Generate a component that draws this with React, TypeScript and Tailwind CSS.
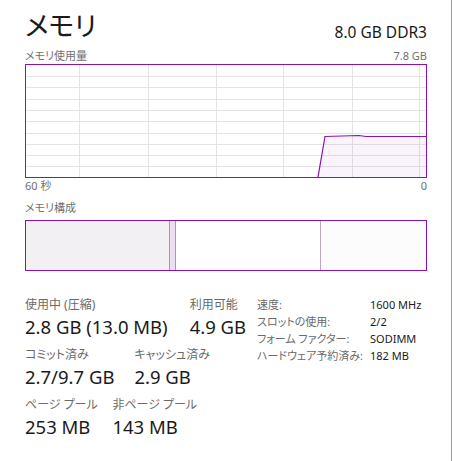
import React from 'react'

const font = { fontFamily: '"Noto Sans", "Noto Sans CJK JP", sans-serif' }

function UsageChart() {
  const vLines = [53, 122, 190, 257, 326, 393]
  const hLines = [11, 22, 34, 45, 56, 68, 79, 90, 101]
  return (
    <div className="h-[114px] w-[402px] border border-[#8b12ae] bg-white">
      <svg width="400" height="112" viewBox="0 0 400 112" className="block">
        {vLines.map(x => (
          <line key={'v' + x} x1={x + 0.5} y1="0" x2={x + 0.5} y2="112" stroke="#e4e4e4" strokeWidth="1" />
        ))}
        {hLines.map(y => (
          <line key={'h' + y} x1="0" y1={y + 0.5} x2="400" y2={y + 0.5} stroke="#e4e4e4" strokeWidth="1" />
        ))}
        <path d="M292 112 L299 71.5 L333 70.5 L340 71.5 L400 71.5 L400 112 Z" fill="#8b12ae" fillOpacity="0.05" />
        <path d="M292 112 L299 71.5 L333 70.5 L340 71.5 L400 71.5" fill="none" stroke="#8b12ae" strokeWidth="1.2" />
      </svg>
    </div>
  )
}

function CompositionBar() {
  return (
    <div className="flex h-[51px] w-[402px] border border-[#8b12ae] bg-white">
      <div className="w-[143px] bg-[#f3f0f4]" />
      <div className="w-[7px] border-x border-[#b48fc0] bg-[#ece0f0]" />
      <div className="w-[145px] border-r border-[#b8a8bd] bg-white" />
      <div className="flex-1 bg-[#fdfcfd]" />
    </div>
  )
}

function Stat({ label, value }: { label: string; value: string }) {
  // label overflows so only the value sets the column width
  return (
    <div className="flex flex-col">
      <span className="h-[18px] w-0 whitespace-nowrap text-[12px] leading-[18px] text-[#6a6a6a]">{label}</span>
      <span className="whitespace-nowrap text-[18.5px] leading-[26px] text-[#1a1a1a]">{value}</span>
    </div>
  )
}

export default function App() {
  const details = [
    ['速度:', '1600 MHz'],
    ['スロットの使用:', '2/2'],
    ['フォーム ファクター:', 'SODIMM'],
    ['ハードウェア予約済み:', '182 MB'],
  ]

  return (
    <div
      className="h-[461px] w-[452px] border-r border-[#9a9a9a] bg-white pl-[25px] pr-[24px] [font-feature-settings:'palt']"
      style={font}
    >
      <div className="flex items-end justify-between pt-[6px]">
        <h1 className="text-[27px] leading-[40px] text-[#1a1a1a]">メモリ</h1>
        <span className="mb-[3px] text-[15.5px] leading-[22px] text-[#1a1a1a]">8.0 GB DDR3</span>
      </div>

      <div className="mt-[2px] flex justify-between text-[11px] leading-[16px] text-[#707070]">
        <span>メモリ使用量</span>
        <span>7.8 GB</span>
      </div>
      <UsageChart />
      <div className="flex justify-between text-[11px] leading-[16px] text-[#707070]">
        <span>60 秒</span>
        <span>0</span>
      </div>

      <div className="mt-[6px] text-[11px] leading-[16px] text-[#707070]">メモリ構成</div>
      <div className="mt-[4px]">
        <CompositionBar />
      </div>

      <div className="mt-[25px] flex">
        <div className="flex w-[232px] flex-col gap-[6px]">
          <div className="flex gap-[22px]">
            <Stat label="使用中 (圧縮)" value="2.8 GB (13.0 MB)" />
            <Stat label="利用可能" value="4.9 GB" />
          </div>
          <div className="flex gap-[20px]">
            <Stat label="コミット済み" value="2.7/9.7 GB" />
            <Stat label="キャッシュ済み" value="2.9 GB" />
          </div>
          <div className="flex gap-[22px]">
            <Stat label="ページ プール" value="253 MB" />
            <Stat label="非ページ プール" value="143 MB" />
          </div>
        </div>
        <div className="grid grid-cols-[113px_auto] content-start text-[11px] leading-[17px]">
          {details.map(([k, v]) => (
            <React.Fragment key={k}>
              <span className="whitespace-nowrap text-[#6a6a6a]">{k}</span>
              <span className="whitespace-nowrap text-[#1a1a1a]">{v}</span>
            </React.Fragment>
          ))}
        </div>
      </div>
    </div>
  )
}
